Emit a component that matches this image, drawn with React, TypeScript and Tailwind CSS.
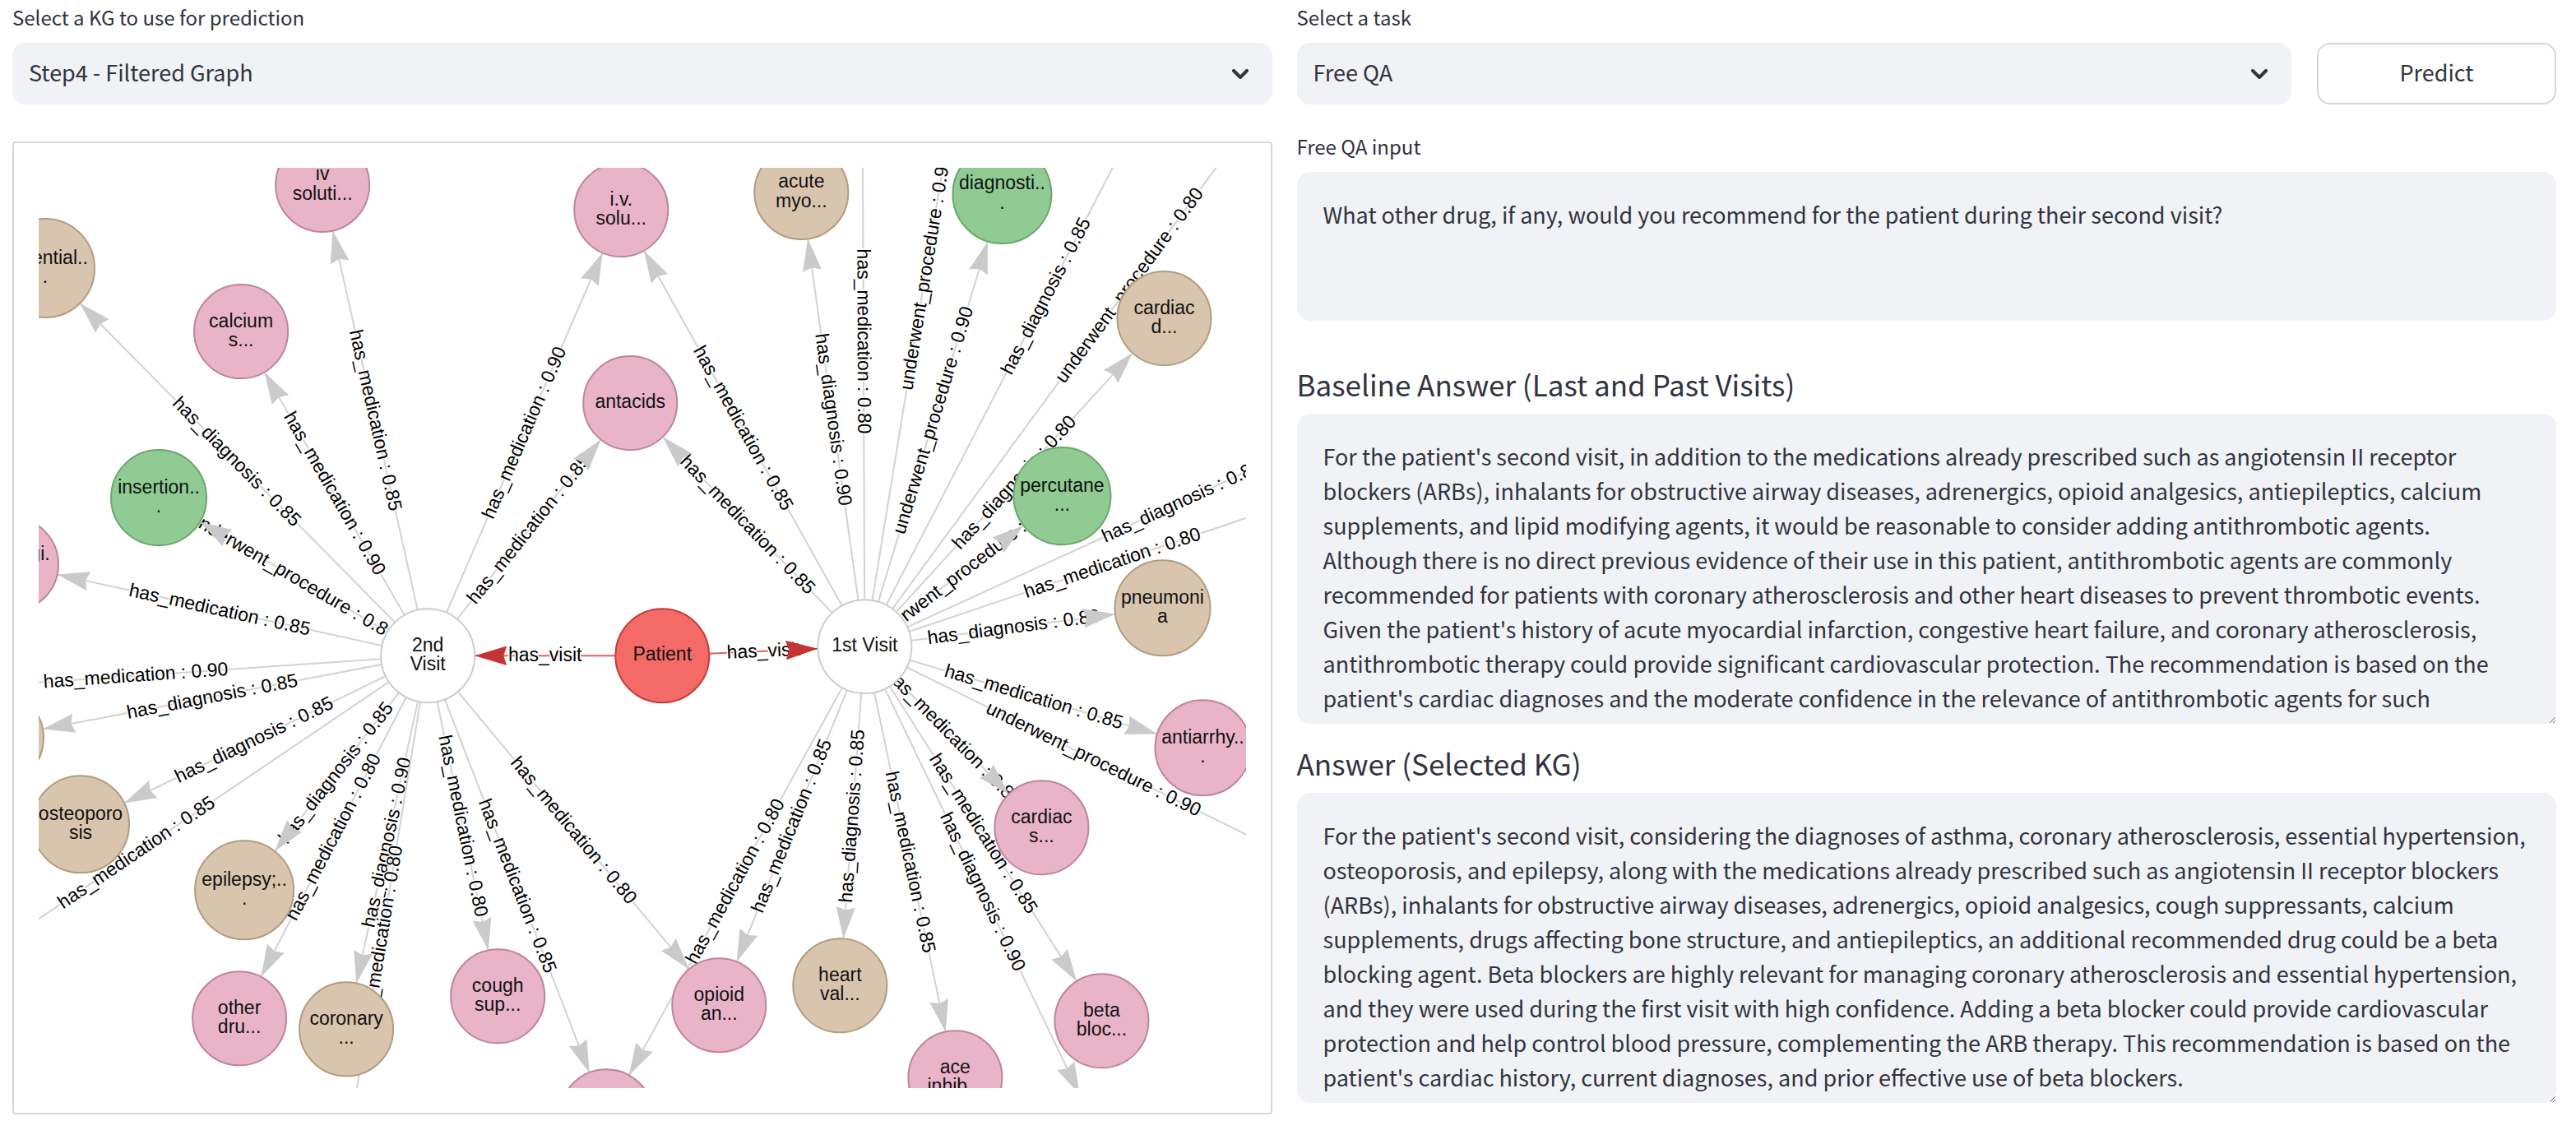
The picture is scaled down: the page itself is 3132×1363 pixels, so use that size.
import { useState } from "react";

type Kind = "patient" | "visit" | "medication" | "diagnosis" | "procedure";

interface GraphNode {
  id: string;
  x: number;
  y: number;
  r: number;
  kind: Kind;
  lines: string[];
}

interface GraphEdge {
  from: string;
  to: string;
  label: string;
}

const NODE_COLORS: Record<Kind, string> = {
  patient: "fill-[#f46a66] stroke-[#c83a3a]",
  visit: "fill-white stroke-[#cccccc]",
  medication: "fill-[#eab4c8] stroke-[#bd8599]",
  diagnosis: "fill-[#d9c5ae] stroke-[#b09c80]",
  procedure: "fill-[#90cb93] stroke-[#6aa66d]",
};

const NODES: GraphNode[] = [
  { id: "patient", x: 805, y: 797, r: 57, kind: "patient", lines: ["Patient"] },
  { id: "v1", x: 1051, y: 786, r: 57, kind: "visit", lines: ["1st Visit"] },
  { id: "v2", x: 520, y: 797, r: 57, kind: "visit", lines: ["2nd", "Visit"] },
  { id: "ivSoluti", x: 392, y: 225, r: 57, kind: "medication", lines: ["iv", "soluti..."] },
  { id: "ivSolu", x: 755, y: 255, r: 57, kind: "medication", lines: ["i.v.", "solu..."] },
  { id: "essential", x: 55, y: 326, r: 60, kind: "diagnosis", lines: ["essential..", "."] },
  { id: "calcium", x: 293, y: 403, r: 57, kind: "medication", lines: ["calcium", "s..."] },
  { id: "antacids", x: 766, y: 490, r: 57, kind: "medication", lines: ["antacids"] },
  { id: "insertion", x: 193, y: 605, r: 58, kind: "procedure", lines: ["insertion..", "."] },
  { id: "antifungi", x: 14, y: 686, r: 57, kind: "medication", lines: ["antifungi.", ".."] },
  { id: "asthma", x: -4, y: 897, r: 57, kind: "diagnosis", lines: ["asthma"] },
  { id: "osteo", x: 98, y: 1002, r: 59, kind: "diagnosis", lines: ["osteoporo", "sis"] },
  { id: "epilepsy", x: 297, y: 1082, r: 60, kind: "diagnosis", lines: ["epilepsy;..", "."] },
  { id: "other", x: 291, y: 1238, r: 57, kind: "medication", lines: ["other", "dru..."] },
  { id: "coronary", x: 421, y: 1251, r: 57, kind: "diagnosis", lines: ["coronary", "..."] },
  { id: "cough", x: 605, y: 1211, r: 57, kind: "medication", lines: ["cough", "sup..."] },
  { id: "bottom", x: 737, y: 1357, r: 57, kind: "medication", lines: [] },
  { id: "opioid", x: 874, y: 1222, r: 57, kind: "medication", lines: ["opioid", "an..."] },
  { id: "heart", x: 1021, y: 1198, r: 57, kind: "diagnosis", lines: ["heart", "val..."] },
  { id: "ace", x: 1161, y: 1310, r: 57, kind: "medication", lines: ["ace", "inhib..."] },
  { id: "beta", x: 1339, y: 1241, r: 57, kind: "medication", lines: ["beta", "bloc..."] },
  { id: "cardiacS", x: 1266, y: 1006, r: 57, kind: "medication", lines: ["cardiac", "s..."] },
  { id: "antiarrhy", x: 1462, y: 909, r: 58, kind: "medication", lines: ["antiarrhy..", "."] },
  { id: "pneumonia", x: 1413, y: 739, r: 58, kind: "diagnosis", lines: ["pneumoni", "a"] },
  { id: "percutane", x: 1291, y: 603, r: 59, kind: "procedure", lines: ["percutane", "..."] },
  { id: "cardiacD", x: 1415, y: 387, r: 57, kind: "diagnosis", lines: ["cardiac", "d..."] },
  { id: "diagnosti", x: 1218, y: 236, r: 60, kind: "procedure", lines: ["diagnosti..", "."] },
  { id: "acute", x: 974, y: 234, r: 57, kind: "diagnosis", lines: ["acute", "myo..."] },
  // neighbours outside the current viewport
  { id: "out1", x: -190, y: 846, r: 57, kind: "medication", lines: [] },
  { id: "out2", x: -188, y: 1276, r: 57, kind: "medication", lines: [] },
  { id: "out3", x: 408, y: 1481, r: 57, kind: "medication", lines: [] },
  { id: "out4", x: 1048, y: 44, r: 57, kind: "medication", lines: [] },
  { id: "out5", x: 1199, y: -122, r: 57, kind: "procedure", lines: [] },
  { id: "out6", x: 1492, y: -66, r: 57, kind: "diagnosis", lines: [] },
  { id: "out7", x: 1695, y: -92, r: 57, kind: "procedure", lines: [] },
  { id: "out8", x: 1822, y: 433, r: 57, kind: "diagnosis", lines: [] },
  { id: "out9", x: 1653, y: 583, r: 57, kind: "medication", lines: [] },
  { id: "out10", x: 1607, y: 1060, r: 57, kind: "procedure", lines: [] },
  { id: "out11", x: 1337, y: 1382, r: 57, kind: "diagnosis", lines: [] },
];

const EDGES: GraphEdge[] = [
  { from: "patient", to: "v2", label: "has_visit" },
  { from: "patient", to: "v1", label: "has_visit" },
  { from: "v2", to: "ivSoluti", label: "has_medication : 0.85" },
  { from: "v2", to: "essential", label: "has_diagnosis : 0.85" },
  { from: "v2", to: "calcium", label: "has_medication : 0.90" },
  { from: "v2", to: "insertion", label: "underwent_procedure : 0.80" },
  { from: "v2", to: "antifungi", label: "has_medication : 0.85" },
  { from: "v2", to: "out1", label: "has_medication : 0.90" },
  { from: "v2", to: "asthma", label: "has_diagnosis : 0.85" },
  { from: "v2", to: "osteo", label: "has_diagnosis : 0.85" },
  { from: "v2", to: "out2", label: "has_medication : 0.85" },
  { from: "v2", to: "epilepsy", label: "has_diagnosis : 0.85" },
  { from: "v2", to: "other", label: "has_medication : 0.80" },
  { from: "v2", to: "coronary", label: "has_diagnosis : 0.90" },
  { from: "v2", to: "out3", label: "has_medication : 0.80" },
  { from: "v2", to: "cough", label: "has_medication : 0.80" },
  { from: "v2", to: "bottom", label: "has_medication : 0.85" },
  { from: "v2", to: "opioid", label: "has_medication : 0.80" },
  { from: "v2", to: "ivSolu", label: "has_medication : 0.90" },
  { from: "v2", to: "antacids", label: "has_medication : 0.85" },
  { from: "v1", to: "ivSolu", label: "has_medication : 0.85" },
  { from: "v1", to: "antacids", label: "has_medication : 0.85" },
  { from: "v1", to: "acute", label: "has_diagnosis : 0.90" },
  { from: "v1", to: "out4", label: "has_medication : 0.80" },
  { from: "v1", to: "out5", label: "underwent_procedure : 0.90" },
  { from: "v1", to: "diagnosti", label: "underwent_procedure : 0.90" },
  { from: "v1", to: "out6", label: "has_diagnosis : 0.85" },
  { from: "v1", to: "out7", label: "underwent_procedure : 0.80" },
  { from: "v1", to: "cardiacD", label: "has_diagnosis : 0.80" },
  { from: "v1", to: "percutane", label: "underwent_procedure : 0.85" },
  { from: "v1", to: "out8", label: "has_diagnosis : 0.85" },
  { from: "v1", to: "out9", label: "has_medication : 0.80" },
  { from: "v1", to: "pneumonia", label: "has_diagnosis : 0.80" },
  { from: "v1", to: "antiarrhy", label: "has_medication : 0.85" },
  { from: "v1", to: "out10", label: "underwent_procedure : 0.90" },
  { from: "v1", to: "cardiacS", label: "has_medication : 0.80" },
  { from: "v1", to: "beta", label: "has_medication : 0.85" },
  { from: "v1", to: "out11", label: "has_diagnosis : 0.90" },
  { from: "v1", to: "ace", label: "has_medication : 0.85" },
  { from: "v1", to: "heart", label: "has_diagnosis : 0.85" },
  { from: "v1", to: "opioid", label: "has_medication : 0.85" },
  { from: "v1", to: "bottom", label: "has_medication : 0.80" },
];

const BASELINE_ANSWER =
  "For the patient's second visit, in addition to the medications already prescribed such as angiotensin II receptor blockers (ARBs), inhalants for obstructive airway diseases, adrenergics, opioid analgesics, antiepileptics, calcium supplements, and lipid modifying agents, it would be reasonable to consider adding antithrombotic agents.\nAlthough there is no direct previous evidence of their use in this patient, antithrombotic agents are commonly recommended for patients with coronary atherosclerosis and other heart diseases to prevent thrombotic events.\nGiven the patient's history of acute myocardial infarction, congestive heart failure, and coronary atherosclerosis, antithrombotic therapy could provide significant cardiovascular protection. The recommendation is based on the patient's cardiac diagnoses and the moderate confidence in the relevance of antithrombotic agents for such";

const KG_ANSWER =
  "For the patient's second visit, considering the diagnoses of asthma, coronary atherosclerosis, essential hypertension, osteoporosis, and epilepsy, along with the medications already prescribed such as angiotensin II receptor blockers (ARBs), inhalants for obstructive airway diseases, adrenergics, opioid analgesics, cough suppressants, calcium supplements, drugs affecting bone structure, and antiepileptics, an additional recommended drug could be a beta blocking agent. Beta blockers are highly relevant for managing coronary atherosclerosis and essential hypertension, and they were used during the first visit with high confidence. Adding a beta blocker could provide cardiovascular protection and help control blood pressure, complementing the ARB therapy. This recommendation is based on the patient's cardiac history, current diagnoses, and prior effective use of beta blockers.";

const ARROW = 39;
const FONT = 23;

function layoutEdge(edge: GraphEdge) {
  const a = NODES.find((n) => n.id === edge.from)!;
  const b = NODES.find((n) => n.id === edge.to)!;
  const angle = Math.atan2(b.y - a.y, b.x - a.x);
  const tipX = b.x - Math.cos(angle) * b.r;
  const tipY = b.y - Math.sin(angle) * b.r;
  const deg = (angle * 180) / Math.PI;
  // keep labels upright
  const textDeg = deg > 90 ? deg - 180 : deg < -90 ? deg + 180 : deg;
  return { a, b, deg, textDeg, tipX, tipY, midX: (a.x + b.x) / 2, midY: (a.y + b.y) / 2 };
}

function KnowledgeGraph() {
  return (
    <svg viewBox="47 204 1467 1119" className="block w-full" role="img" aria-label="Knowledge graph">
      {EDGES.map((edge) => {
        const { a, b, textDeg, midX, midY } = layoutEdge(edge);
        return (
          <g key={`${edge.from}-${edge.to}`}>
            <line
              x1={a.x}
              y1={a.y}
              x2={b.x}
              y2={b.y}
              strokeWidth={2}
              className={edge.from === "patient" ? "stroke-[#e0605e]" : "stroke-[#d2d2d2]"}
            />
            <text
              transform={`translate(${midX} ${midY}) rotate(${textDeg})`}
              y={7}
              fontSize={FONT}
              textAnchor="middle"
              strokeWidth={3}
              className="fill-black stroke-white [paint-order:stroke]"
            >
              {edge.label}
            </text>
          </g>
        );
      })}
      {NODES.map((n) => (
        <g key={n.id}>
          <circle cx={n.x} cy={n.y} r={n.r} strokeWidth={2} className={NODE_COLORS[n.kind]} />
          {n.lines.map((line, i) => (
            <text
              key={i}
              x={n.x}
              y={n.y + 6 + (i - (n.lines.length - 1) / 2) * FONT}
              fontSize={FONT}
              textAnchor="middle"
              className="fill-[#111111]"
            >
              {line}
            </text>
          ))}
        </g>
      ))}
      {EDGES.map((edge) => {
        const { deg, tipX, tipY } = layoutEdge(edge);
        return (
          <path
            key={`${edge.from}-${edge.to}`}
            d={`M0 0L${-ARROW} ${ARROW * 0.3}L${-ARROW * 0.9} 0L${-ARROW} ${-ARROW * 0.3}Z`}
            transform={`translate(${tipX} ${tipY}) rotate(${deg})`}
            className={edge.from === "patient" ? "fill-[#c23532]" : "fill-[#cacaca]"}
          />
        );
      })}
    </svg>
  );
}

interface SelectFieldProps {
  id: string;
  label: string;
  options: string[];
}

function SelectField({ id, label, options }: SelectFieldProps) {
  const [value, setValue] = useState(options[0]);

  return (
    <div className="flex-1 min-w-0">
      <label htmlFor={id} className="block text-[24px] leading-7 mb-[17px]">
        {label}
      </label>
      <div className="relative">
        <select
          id={id}
          value={value}
          onChange={(e) => setValue(e.target.value)}
          className="block w-full h-[75px] appearance-none rounded-2xl bg-[#f0f2f6] px-5 pb-0.5 text-[27px]"
        >
          {options.map((o) => (
            <option key={o}>{o}</option>
          ))}
        </select>
        <svg
          viewBox="0 0 20 12"
          className="pointer-events-none absolute right-[29px] top-8 w-5 h-3 fill-none stroke-[#31333f]"
          strokeWidth={4}
          strokeLinecap="round"
          strokeLinejoin="round"
        >
          <path d="M2 2l8 8 8-8" />
        </svg>
      </div>
    </div>
  );
}

function AnswerBox({ id, title, text }: { id: string; title: string; text: string }) {
  return (
    <>
      <h3 id={id} className="text-[35px] leading-11 mb-[14px]">
        {title}
      </h3>
      <textarea
        aria-labelledby={id}
        defaultValue={text}
        className="block w-full h-[377px] overflow-hidden rounded-2xl bg-[#f0f2f6] px-8 pt-[31px] text-[27px] leading-[42px]"
      />
    </>
  );
}

export default function App() {
  const [question, setQuestion] = useState(
    "What other drug, if any, would you recommend for the patient during their second visit?"
  );

  return (
    <main className="flex gap-[30px] pt-[7px] pl-[15px] pr-6 bg-white text-[#31333f] font-['Noto_Sans_CJK_SC',sans-serif]">
      <section className="flex-1 min-w-0">
        <SelectField
          id="kg"
          label="Select a KG to use for prediction"
          options={["Step4 - Filtered Graph"]}
        />
        <div className="mt-[45px] rounded-sm border-2 border-[#d6d6d8] p-[30px] font-['Liberation_Sans',Arial,sans-serif]">
          <KnowledgeGraph />
        </div>
      </section>

      <section className="flex-1 min-w-0">
        <div className="flex items-end gap-[31px]">
          <SelectField id="task" label="Select a task" options={["Free QA"]} />
          <button
            type="button"
            className="w-[291px] h-[75px] rounded-2xl border-2 border-[#d6d6d8] bg-white pb-0.5 text-[27px]"
          >
            Predict
          </button>
        </div>

        <label htmlFor="question" className="block mt-[37px] mb-[17px] text-[24px] leading-7">
          Free QA input
        </label>
        <textarea
          id="question"
          value={question}
          onChange={(e) => setQuestion(e.target.value)}
          className="block w-full h-[181px] resize-none rounded-2xl bg-[#f0f2f6] px-8 pt-[31px] text-[27px] leading-[42px]"
        />

        <div className="mt-[55px]">
          <AnswerBox id="baseline" title="Baseline Answer (Last and Past Visits)" text={BASELINE_ANSWER} />
        </div>
        <div className="mt-[26px]">
          <AnswerBox id="selected" title="Answer (Selected KG)" text={KG_ANSWER} />
        </div>
      </section>
    </main>
  );
}
